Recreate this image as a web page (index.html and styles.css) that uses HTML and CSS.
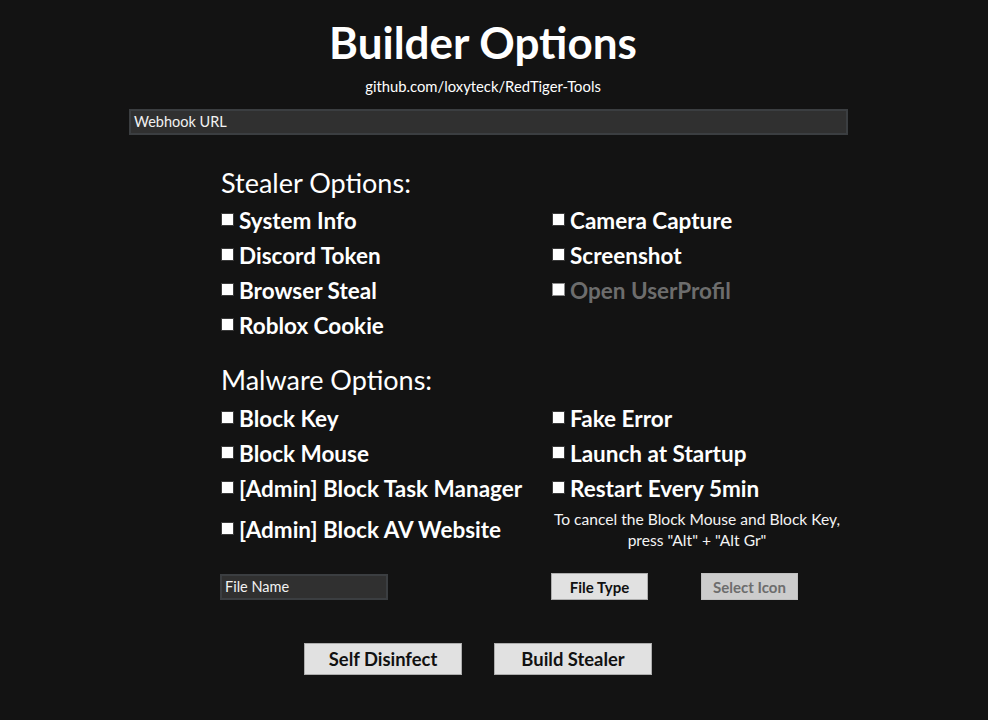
FILE: index.html
```html
<!DOCTYPE html>
<html>
<head>
<meta charset="utf-8">
<link rel="stylesheet" href="styles.css">
</head>
<body>
<main class="page">
  <header class="header">
    <h1 class="title">Builder Options</h1>
    <div class="link">github.com/loxyteck/RedTiger-Tools</div>
  </header>
  <div class="webhook field">Webhook URL</div>

  <section class="options">
    <h2 class="section-title">Stealer Options:</h2>
    <div class="grid">
      <label class="opt"><span class="box"></span>System Info</label>
      <label class="opt"><span class="box"></span>Camera Capture</label>
      <label class="opt"><span class="box"></span>Discord Token</label>
      <label class="opt"><span class="box"></span>Screenshot</label>
      <label class="opt"><span class="box"></span>Browser Steal</label>
      <label class="opt disabled"><span class="box"></span>Open UserProfil</label>
      <label class="opt"><span class="box"></span>Roblox Cookie</label>
    </div>

    <h2 class="section-title malware">Malware Options:</h2>
    <div class="grid malware-grid">
      <label class="opt"><span class="box"></span>Block Key</label>
      <label class="opt"><span class="box"></span>Fake Error</label>
      <label class="opt"><span class="box"></span>Block Mouse</label>
      <label class="opt"><span class="box"></span>Launch at Startup</label>
      <label class="opt"><span class="box"></span>[Admin] Block Task Manager</label>
      <label class="opt"><span class="box"></span>Restart Every 5min</label>
      <label class="opt tall"><span class="box"></span>[Admin] Block AV Website</label>
      <div class="note">To cancel the Block Mouse and Block Key,<br>press "Alt" + "Alt Gr"</div>
    </div>

    <div class="file-row">
      <div class="filename field">File Name</div>
      <button class="btn small filetype">File Type</button>
      <button class="btn small disabled-btn">Select Icon</button>
    </div>
  </section>

  <div class="actions">
    <button class="btn big">Self Disinfect</button>
    <button class="btn big">Build Stealer</button>
  </div>
</main>
</body>
</html>
```
FILE: styles.css
```css
html, body {
  margin: 0;
  padding: 0;
  background: #131313;
  color: #ffffff;
  font-family: "Lato", "Liberation Sans", sans-serif;
}
.page {
  width: 988px;
  height: 720px;
  overflow: hidden;
}
.header {
  display: flex;
  flex-direction: column;
  align-items: center;
  padding-right: 22px;
  padding-top: 17px;
}
.title {
  margin: 0;
  font-size: 44px;
  font-weight: 700;
  line-height: 50px;
}
.link {
  font-size: 14.8px;
  line-height: 18px;
  margin-top: 10px;
}
.field {
  box-sizing: border-box;
  background: #303030;
  border: 2px solid #3b3e41;
  color: #f2f2f2;
  font-size: 14.5px;
  line-height: 22px;
  padding-left: 3px;
  height: 26px;
}
.webhook {
  margin-top: 14px;
  margin-left: 129px;
  width: 719px;
}
.options {
  margin-left: 221px;
  width: 620px;
}
.section-title {
  margin: 0;
  font-size: 27px;
  font-weight: 400;
  line-height: 32px;
  margin-top: 32px;
}
.section-title.malware {
  margin-top: 21px;
}
.grid {
  display: grid;
  grid-template-columns: 331px 290px;
  grid-auto-rows: 35px;
  margin-top: 4px;
}
.malware-grid {
  margin-top: 5px;
}
.opt {
  display: flex;
  align-items: center;
  font-size: 22.5px;
  font-weight: 700;
  color: #ffffff;
}
.opt.disabled {
  color: #6d6d6d;
}
.opt.tall {
  height: 47px;
}
.box {
  box-sizing: border-box;
  width: 13px;
  height: 13px;
  background: #ffffff;
  border: 1px solid #3a3a3a;
  margin-right: 5px;
  margin-top: -2px;
  flex: none;
}
.opt.disabled .box {
  border-color: #8a8a8a;
}
.note {
  font-size: 15.6px;
  line-height: 21px;
  text-align: center;
  padding-top: 3px;
  color: #f4f4f4;
}
.file-row {
  display: flex;
  align-items: center;
  margin-top: 32px;
}
.filename {
  width: 168px;
  margin-left: -1px;
}
.btn {
  box-sizing: border-box;
  font-family: "Lato", "Liberation Sans", sans-serif;
  font-weight: 700;
  background: #e1e1e1;
  border: 1px solid #adadad;
  color: #111111;
  padding: 0;
  margin: 0;
}
.btn.small {
  width: 97px;
  height: 27px;
  font-size: 15px;
}
.filetype {
  margin-left: 163px;
}
.disabled-btn {
  margin-left: 53px;
  background: #cccccc;
  border-color: #bfbfbf;
  color: #6d6d6d;
}
.actions {
  display: flex;
  justify-content: center;
  gap: 32px;
  padding-right: 32px;
  margin-top: 43px;
}
.btn.big {
  width: 158px;
  height: 32px;
  font-size: 18.4px;
}
```
